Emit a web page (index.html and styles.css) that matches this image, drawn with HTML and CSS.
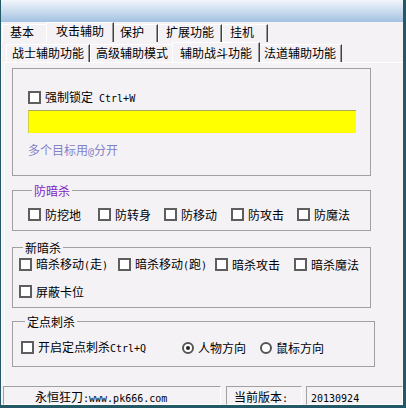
FILE: index.html
```html
<!DOCTYPE html>
<html lang="zh-CN">
<head>
<meta charset="utf-8">
<title>攻击辅助</title>
<link rel="stylesheet" href="styles.css">
</head>
<body>
<div class="window">
  <div class="titlebar"></div>
  <div class="tabs main-tabs">
    <div class="tab">基本</div>
    <div class="tab active">攻击辅助</div>
    <div class="tab">保护</div>
    <div class="tab">扩展功能</div>
    <div class="tab">挂机</div>
  </div>
  <div class="main-panel">
    <div class="tabs sub-tabs">
      <div class="tab">战士辅助功能</div>
      <div class="tab">高级辅助模式</div>
      <div class="tab active">辅助战斗功能</div>
      <div class="tab">法道辅助功能</div>
    </div>
    <div class="sub-panel">
      <div class="box lock-box">
        <label class="opt"><span class="cb"></span><span>强制锁定<span class="mono"> Ctrl+W</span></span></label>
        <div class="yellow-input"></div>
        <div class="hint">多个目标用<span class="mono">@</span>分开</div>
      </div>

      <fieldset class="group g-fang">
        <legend class="purple">防暗杀</legend>
        <div class="row row-fang">
          <label class="opt"><span class="cb"></span><span>防挖地</span></label>
          <label class="opt"><span class="cb"></span><span>防转身</span></label>
          <label class="opt"><span class="cb"></span><span>防移动</span></label>
          <label class="opt"><span class="cb"></span><span>防攻击</span></label>
          <label class="opt"><span class="cb"></span><span>防魔法</span></label>
        </div>
      </fieldset>

      <fieldset class="group g-new">
        <legend>新暗杀</legend>
        <div class="row row-new">
          <label class="opt"><span class="cb"></span><span>暗杀移动<span class="mono">(</span>走<span class="mono">)</span></span></label>
          <label class="opt"><span class="cb"></span><span>暗杀移动<span class="mono">(</span>跑<span class="mono">)</span></span></label>
          <label class="opt"><span class="cb"></span><span>暗杀攻击</span></label>
          <label class="opt"><span class="cb"></span><span>暗杀魔法</span></label>
        </div>
        <div class="row row-new second">
          <label class="opt"><span class="cb"></span><span>屏蔽卡位</span></label>
        </div>
      </fieldset>

      <fieldset class="group g-point">
        <legend>定点刺杀</legend>
        <div class="row row-point">
          <label class="opt"><span class="cb"></span><span>开启定点刺杀<span class="mono">Ctrl+Q</span></span></label>
          <label class="opt"><span class="rb on"></span><span>人物方向</span></label>
          <label class="opt"><span class="rb"></span><span>鼠标方向</span></label>
        </div>
      </fieldset>
    </div>
  </div>
  <div class="statusbar">
    <div class="sb-part sb-site">永恒狂刀<span class="mono">:www.pk666.com</span></div>
    <div class="sb-part sb-label">当前版本<span class="mono">:</span></div>
    <div class="sb-part sb-ver"><span class="mono">20130924</span></div>
  </div>
</div>
</body>
</html>
```

FILE: styles.css
```css
* { box-sizing: border-box; }
html, body { margin: 0; padding: 0; }
body {
  width: 406px;
  height: 408px;
  overflow: hidden;
  background: #f5f2f6;
  font-family: "Noto Sans CJK SC", "Noto Sans", sans-serif;
  font-size: 12px;
  line-height: 13px;
  color: #000;
}
.mono {
  font-family: "DejaVu Sans Mono", "Liberation Mono", monospace;
  font-size: 10px;
}
.window {
  width: 406px;
  height: 408px;
  display: flex;
  flex-direction: column;
  border-left: 1px solid #245866;
  border-right: 3px solid #245866;
  border-bottom: 3px solid #245866;
  background: #f5f2f6;
}
.titlebar {
  flex: none;
  height: 22px;
  background: linear-gradient(#f2f6fb, #a3c2e2);
}

/* tabs */
.tabs {
  flex: none;
  display: flex;
  align-items: flex-end;
  height: 20px;
}
.main-tabs { padding-left: 1px; }
.tab {
  height: 18px;
  min-width: 46px;
  padding: 1px 7px 0 7px;
  line-height: 13px;
  white-space: nowrap;
  border-top: 1px solid #fff;
  border-left: 1px solid #fff;
  border-right: 1px solid #404040;
  box-shadow: inset -1px 0 #9a9a9a;
  background: #f5f2f6;
}
.main-tabs .tab { padding-top: 0; }
.main-tabs .tab.active {
  position: relative;
  z-index: 1;
  height: 20px;
  margin: 0 -2px;
  padding: 1px 9px 0 9px;
}
.main-panel {
  flex: 1;
  display: flex;
  flex-direction: column;
  border-left: 1px solid #fff;
  min-height: 0;
}
.sub-tabs { margin-left: 4px; }
.sub-tabs .tab { padding: 1px 5px 0 5px; }
.sub-tabs .tab.active {
  position: relative;
  z-index: 1;
  height: 20px;
  margin: 0 -2px;
  padding: 3px 7px 0 7px;
}
.sub-panel {
  flex: 1;
  margin-left: 2px;
  padding: 0 0 0 7px;
  border-top: 1px solid #fff;
  border-left: 1px solid #fff;
}

/* option controls */
.opt {
  display: inline-flex;
  align-items: center;
  gap: 4px;
  height: 13px;
  white-space: nowrap;
}
.cb {
  flex: none;
  width: 13px;
  height: 13px;
  border: 2px solid #5e5e5e;
  background: #fff;
}
.rb {
  flex: none;
  width: 12px;
  height: 12px;
  border: 2px solid #555;
  border-radius: 50%;
  background: #fff;
  display: flex;
  align-items: center;
  justify-content: center;
}
.rb.on::after {
  content: "";
  width: 4px;
  height: 4px;
  border-radius: 50%;
  background: #222;
}

/* plain group box */
.box {
  width: 359px;
  margin-top: 5px;
  padding: 22px 0 17px 15px;
  border: 1px solid #a0a0a0;
  display: flex;
  flex-direction: column;
  align-items: flex-start;
}
.yellow-input {
  width: 328px;
  height: 23px;
  margin-top: 6px;
  background: #ffff00;
  border-top: 1px solid #a9a95a;
  border-left: 1px solid #cfcf40;
}
.hint {
  margin-top: 10px;
  color: #8282c8;
}

/* titled groups */
.group {
  margin: 0;
  padding: 0;
  width: 359px;
  min-inline-size: 0;
  border: 1px solid #a0a0a0;
}
.group legend {
  margin-left: 4px;
  padding: 0 2px;
  line-height: 13px;
}
.group legend.purple { color: #7f1cc4; }
.row { display: grid; align-items: center; }

.g-fang { margin-top: 8px; padding: 11px 0 9px 15px; }
.row-fang { grid-template-columns: 70px 66px 67px 66px auto; }

.g-new { margin-top: 10px; padding: 4px 0 9px 6px; }
.row-new { grid-template-columns: 99px 97px 79px auto; }
.row-new.second { margin-top: 14px; }

.g-point { width: 363px; margin-top: 7px; padding: 13px 0 12px 8px; }
.row-point { grid-template-columns: 161px 78px auto; }

/* status bar */
.statusbar {
  flex: none;
  height: 19px;
  display: flex;
  padding-left: 2px;
}
.sb-part {
  height: 19px;
  padding-top: 3px;
  white-space: nowrap;
  border-top: 1px solid #a0a0a0;
  border-left: 1px solid #a0a0a0;
  border-right: 1px solid #fff;
  border-bottom: 1px solid #fff;
}
.sb-site { width: 218px; padding-left: 31px; }
.sb-label { width: 76px; margin-left: 5px; padding-left: 7px; }
.sb-ver { width: 97px; margin-left: 4px; padding-left: 4px; }
```
